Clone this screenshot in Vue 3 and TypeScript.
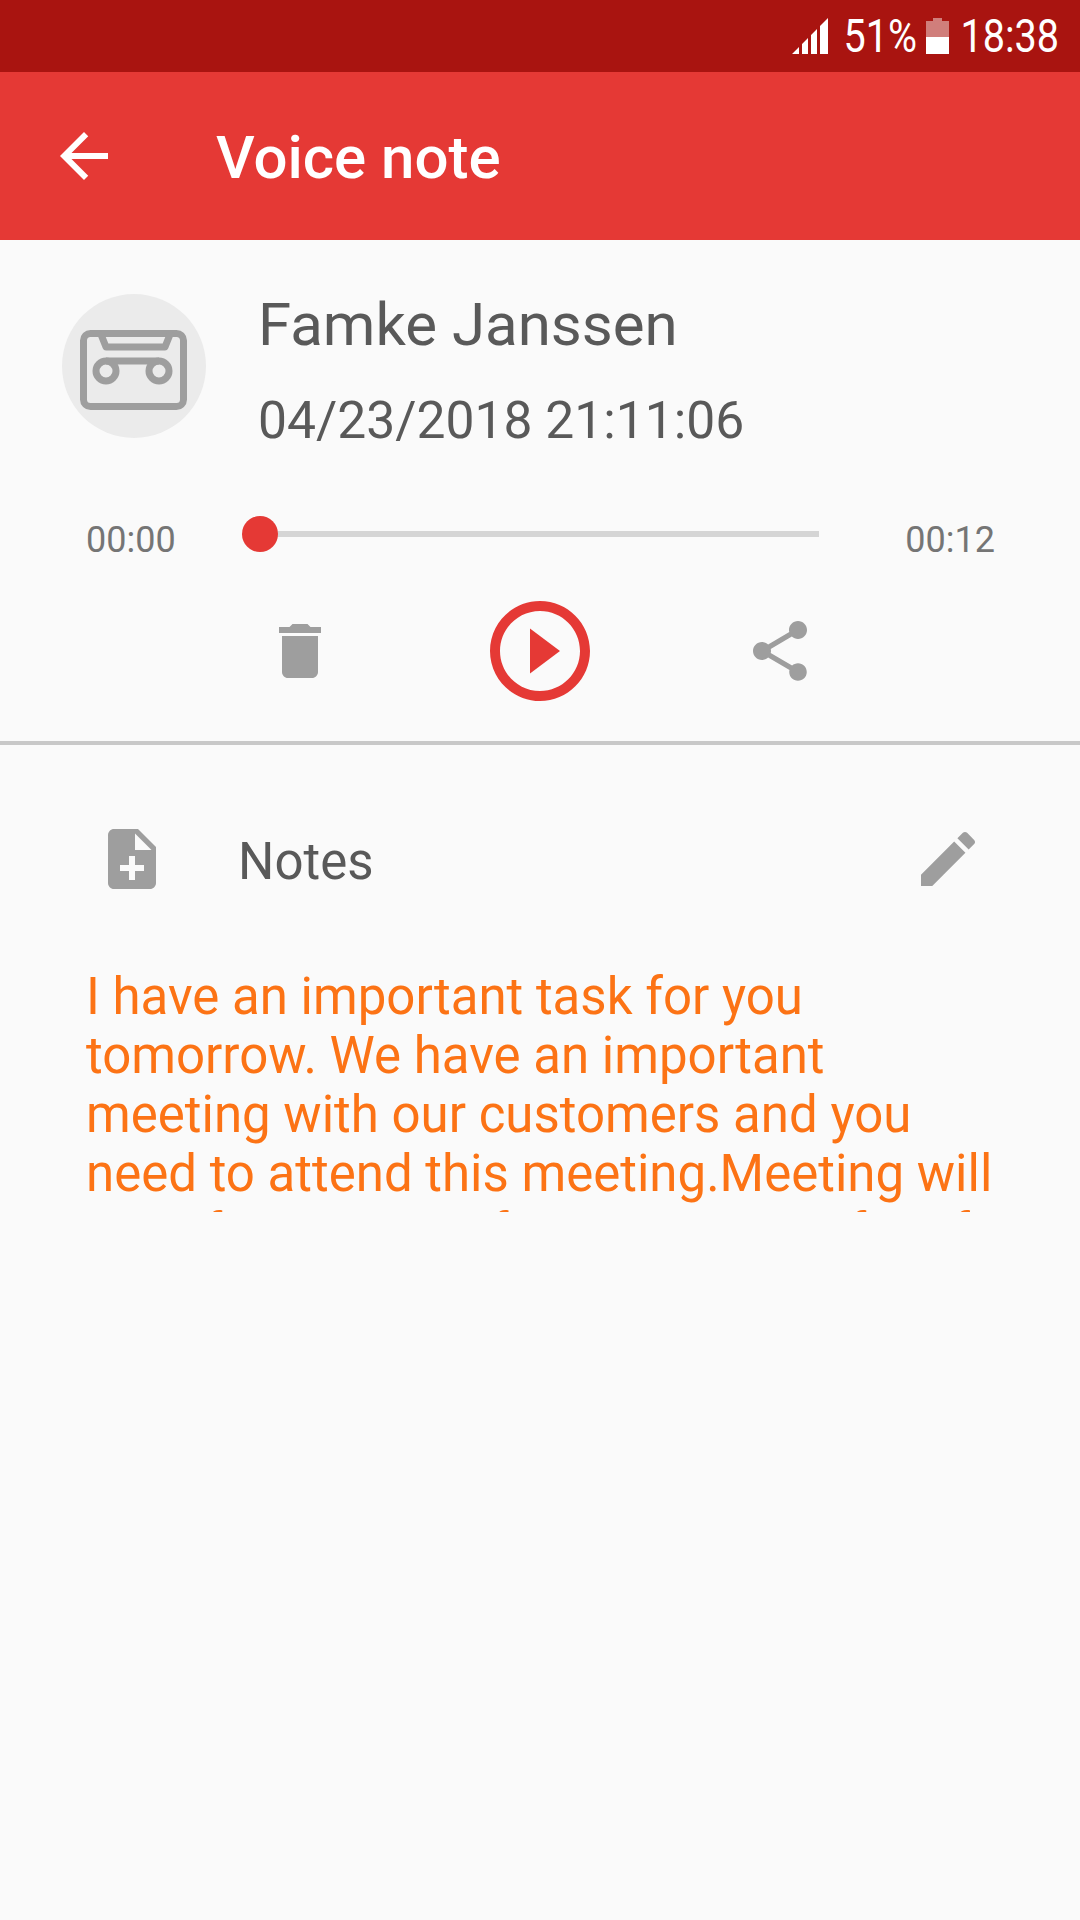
<script setup lang="ts">
const noteText =
  'I have an important task for you tomorrow. We have an important meeting with our customers and you need to attend this meeting.Meeting will start from 10 am, for some time after if you can'
</script>

<template>
  <div class="screen">
    <div class="status-bar">
      <svg class="signal" width="36" height="36" viewBox="0 0 36 36">
        <path d="M0 36 7 29V36zM10 26 16 20V36H10zM19 17 25 11V36H19zM28 8 36 0V36H28z" fill="#fff" />
      </svg>
      <span class="status-text pct">51%</span>
      <svg class="battery" width="23" height="36" viewBox="0 0 23 36">
        <path d="M7 0H16V3H23V19H0V3H7z" fill="#fff" fill-opacity="0.45" />
        <rect y="19" width="23" height="17" fill="#fff" />
      </svg>
      <span class="status-text clock">18:38</span>
    </div>

    <header class="app-bar">
      <svg class="back" width="72" height="72" viewBox="0 0 24 24">
        <path d="M20 11H7.83l5.59-5.59L12 4l-8 8 8 8 1.41-1.41L7.83 13H20v-2z" fill="#fff" />
      </svg>
      <h1>Voice note</h1>
    </header>

    <section class="player">
      <div class="contact">
        <div class="avatar">
          <svg width="144" height="144" viewBox="0 0 144 144" fill="none" stroke="#9e9e9e" stroke-width="7">
            <rect x="21.5" y="39.5" width="100" height="73" rx="7" />
            <path d="M38 38 44 53H103L109 38" stroke-linejoin="round" />
            <circle cx="44" cy="77" r="10" />
            <circle cx="97" cy="77" r="10" />
            <path d="M44 67H97" />
          </svg>
        </div>
        <div class="contact-text">
          <div class="name">Famke Janssen</div>
          <div class="date">04/23/2018 21:11:06</div>
        </div>
      </div>

      <div class="seek">
        <span class="time">00:00</span>
        <div class="track"><span class="thumb"></span></div>
        <span class="time">00:12</span>
      </div>

      <div class="controls">
        <svg width="72" height="72" viewBox="0 0 24 24">
          <path d="M6 19c0 1.1.9 2 2 2h8c1.1 0 2-.9 2-2V7H6v12zM19 4h-3.5l-1-1h-5l-1 1H5v2h14V4z" fill="#9e9e9e" />
        </svg>
        <svg width="120" height="120" viewBox="0 0 24 24">
          <path d="M10 16.5l6-4.5-6-4.5v9zM12 2C6.48 2 2 6.48 2 12s4.48 10 10 10 10-4.48 10-10S17.52 2 12 2zm0 18c-4.41 0-8-3.59-8-8s3.59-8 8-8 8 3.59 8 8-3.59 8-8 8z" fill="#e53935" />
        </svg>
        <svg width="72" height="72" viewBox="0 0 24 24">
          <path d="M18 16.08c-.76 0-1.44.3-1.96.77L8.91 12.7c.05-.23.09-.46.09-.7s-.04-.47-.09-.7l7.05-4.11c.54.5 1.25.81 2.04.81 1.66 0 3-1.34 3-3s-1.34-3-3-3-3 1.34-3 3c0 .24.04.47.09.7L8.04 9.81C7.5 9.31 6.79 9 6 9c-1.66 0-3 1.34-3 3s1.34 3 3 3c.79 0 1.5-.31 2.04-.81l7.12 4.16c-.05.21-.08.43-.08.65 0 1.61 1.31 2.92 2.92 2.92 1.61 0 2.92-1.31 2.92-2.92s-1.31-2.92-2.92-2.92z" fill="#9e9e9e" />
        </svg>
      </div>
    </section>

    <section class="notes">
      <div class="notes-head">
        <svg width="72" height="72" viewBox="0 0 24 24">
          <path d="M14 2H6c-1.1 0-1.99.9-1.99 2L4 20c0 1.1.89 2 1.99 2H18c1.1 0 2-.9 2-2V8l-6-6zm2 14h-3v3h-2v-3H8v-2h3v-3h2v3h3v2zm-3-7V3.5L18.5 9H13z" fill="#9e9e9e" />
        </svg>
        <span class="notes-title">Notes</span>
        <svg width="72" height="72" viewBox="0 0 24 24">
          <path d="M3 17.25V21h3.75L17.81 9.94l-3.75-3.75L3 17.25zM20.71 7.04c.39-.39.39-1.02 0-1.41l-2.34-2.34c-.39-.39-1.02-.39-1.41 0l-1.83 1.83 3.75 3.75 1.83-1.83z" fill="#9e9e9e" />
        </svg>
      </div>
      <p class="note-body">{{ noteText }}</p>
    </section>
  </div>
</template>

<style scoped>
.screen {
  width: 1080px;
  height: 1920px;
  overflow: hidden;
  background: #fafafa;
  font-family: Roboto, "Noto Sans", sans-serif;
  color: #595959;
}

.status-bar {
  height: 72px;
  background: #a91410;
  display: flex;
  align-items: center;
  justify-content: flex-end;
  padding-right: 21px;
  box-sizing: border-box;
}

.status-text {
  color: #fff;
  font-size: 46px;
  line-height: 72px;
  display: inline-block;
  transform: scaleX(0.86);
  transform-origin: right center;
}

.signal {
  margin-right: 21px;
}

.pct {
  width: 68px;
  white-space: nowrap;
  direction: rtl;
}

.battery {
  margin: 0 16px 0 9px;
}

.clock {
  width: 94px;
  white-space: nowrap;
  direction: rtl;
}

.app-bar {
  height: 168px;
  background: #e53935;
  display: flex;
  align-items: center;
  padding-left: 48px;
}

.app-bar h1 {
  margin: 3px 0 0 96px;
  color: #fff;
  font-size: 60px;
  font-weight: 500;
}

.player {
  height: 501px;
  border-bottom: 4px solid #c8c8c8;
}

.contact {
  display: flex;
  padding: 54px 0 0 62px;
}

.avatar {
  width: 144px;
  height: 144px;
  border-radius: 50%;
  background: #ebebeb;
}

.contact-text {
  margin-left: 52px;
  margin-top: -13px;
}

.name {
  font-size: 60px;
  line-height: 88px;
}

.date {
  font-size: 51.6px;
  line-height: 72px;
  margin-top: 16px;
}

.seek {
  display: flex;
  align-items: center;
  justify-content: space-between;
  padding: 0 85px 0 86px;
  margin-top: 59px;
}

.time {
  font-size: 36px;
  color: #757575;
  line-height: 48px;
}

.track {
  position: relative;
  width: 565px;
  height: 6px;
  background: #d5d5d5;
  margin: -12px 0 0 -8px;
}

.thumb {
  position: absolute;
  left: -12px;
  top: -15px;
  width: 36px;
  height: 36px;
  border-radius: 50%;
  background: #e53935;
}

.controls {
  display: grid;
  grid-template-columns: repeat(3, 240px);
  justify-content: center;
  justify-items: center;
  align-items: center;
  margin-top: 27px;
}

.notes-head {
  display: flex;
  align-items: center;
  margin-top: 78px;
  padding: 0 96px;
}

.notes-title {
  flex: 1;
  margin: 4px 0 0 70px;
  font-size: 51px;
}

.note-body {
  margin: 72px 80px 0 86px;
  font-size: 51px;
  line-height: 59px;
  height: 245px;
  overflow: hidden;
  color: #fc7315;
}
</style>

<style>
html,
body {
  margin: 0;
  background: #fafafa;
}
</style>
